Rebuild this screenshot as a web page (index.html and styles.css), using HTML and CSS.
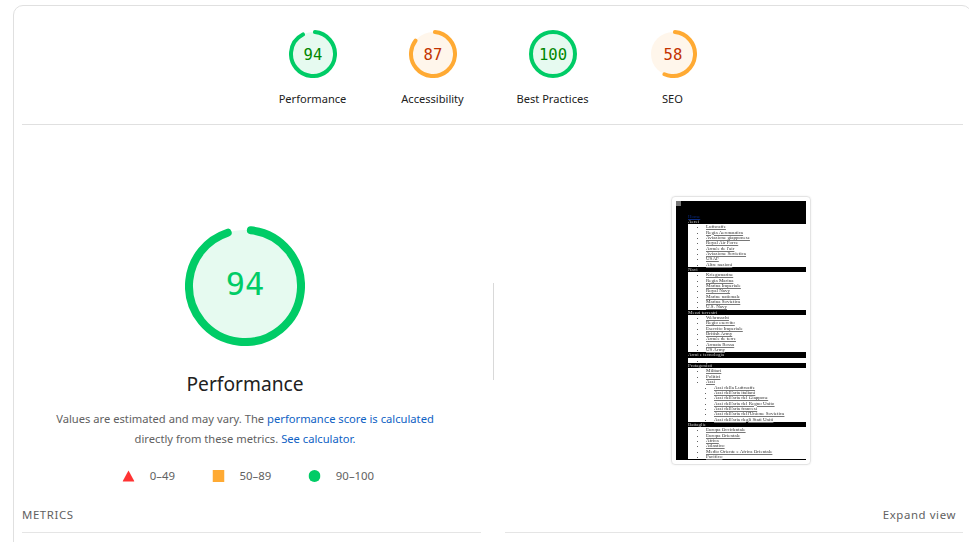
FILE: index.html
```html
<!DOCTYPE html>
<html lang="en">
<head>
<meta charset="utf-8">
<title>Lighthouse report</title>
<link rel="stylesheet" href="styles.css">
</head>
<body>
<div class="card">
  <div class="scores">
    <div class="score">
      <svg class="gauge pass" viewBox="0 0 48 48"><circle class="disc" cx="24" cy="24" r="22"/><circle class="arc" cx="24" cy="24" r="22" pathLength="100" stroke-dasharray="91 100" transform="rotate(-85 24 24)"/><text class="num" x="24" y="29.5">94</text></svg>
      <div class="label">Performance</div>
    </div>
    <div class="score">
      <svg class="gauge avg" viewBox="0 0 48 48"><circle class="disc" cx="24" cy="24" r="22"/><circle class="arc" cx="24" cy="24" r="22" pathLength="100" stroke-dasharray="84 100" transform="rotate(-85 24 24)"/><text class="num" x="24" y="29.5">87</text></svg>
      <div class="label">Accessibility</div>
    </div>
    <div class="score">
      <svg class="gauge pass" viewBox="0 0 48 48"><circle class="disc" cx="24" cy="24" r="22"/><circle class="arc" cx="24" cy="24" r="22"/><text class="num" x="24" y="29.5">100</text></svg>
      <div class="label">Best Practices</div>
    </div>
    <div class="score">
      <svg class="gauge avg" viewBox="0 0 48 48"><circle class="disc" cx="24" cy="24" r="22"/><circle class="arc" cx="24" cy="24" r="22" pathLength="100" stroke-dasharray="55 100" transform="rotate(-85 24 24)"/><text class="num" x="24" y="29.5">58</text></svg>
      <div class="label">SEO</div>
    </div>
  </div>

  <div class="main">
    <section class="summary">
      <svg class="big-gauge" viewBox="0 0 120 120"><circle class="big-disc" cx="60" cy="60" r="56"/><circle class="big-arc" cx="60" cy="60" r="56" pathLength="360" stroke-dasharray="336 360" transform="rotate(-84 60 60)"/><text class="big-num" x="60" y="69">94</text></svg>
      <h1 class="title">Performance</h1>
      <p class="note">Values are estimated and may vary. The <a href="#">performance score is calculated</a><br>directly from these metrics. <a href="#">See calculator.</a></p>
      <div class="legend">
        <span class="key"><svg class="mark" viewBox="0 0 12 12"><path class="fail" d="M6 0.5 12 11.5H0Z"/></svg>0–49</span>
        <span class="key"><svg class="mark" viewBox="0 0 12 12"><rect class="mid" width="12" height="12"/></svg>50–89</span>
        <span class="key"><svg class="mark" viewBox="0 0 12 12"><circle class="good" cx="6" cy="6" r="6"/></svg>90–100</span>
      </div>
    </section>
    <div class="rule"></div>
    <div class="frame">
      <div class="shot">
        <div class="burger"></div>
        <div class="page">
          <a class="home" href="#">Home</a>
          <div class="bar">Aerei</div>
          <ul><li>Luftwaffe</li><li>Regia Aeronautica</li><li>Aviazione giapponese</li><li>Royal Air Force</li><li>Armée de l'air</li><li>Aviazione Sovietica</li><li>USAF</li><li>Altre nazioni</li></ul>
          <div class="bar">Navi</div>
          <ul><li>Kriegsmarine</li><li>Regia Marina</li><li>Marina Imperiale</li><li>Royal Navy</li><li>Marine nationale</li><li>Marina Sovietica</li><li>U.S. Navy</li></ul>
          <div class="bar">Mezzi terrestri</div>
          <ul><li>Wehrmacht</li><li>Regio esercito</li><li>Esercito Imperiale</li><li>British Army</li><li>Armée de terre</li><li>Armata Rossa</li><li>US Army</li></ul>
          <div class="bar">Armi e tecnologia</div>
          <ul><li>&nbsp;</li></ul>
          <div class="bar">Protagonisti</div>
          <ul><li>Militari</li><li>Politici</li><li>Assi
            <ul><li>Assi della Luftwaffe</li><li>Assi dell'aria italiani</li><li>Assi dell'aria del Giappone</li><li>Assi dell'aria del Regno Unito</li><li>Assi dell'aria francesi</li><li>Assi dell'aria dell'Unione Sovietica</li><li>Assi dell'aria degli Stati Uniti</li></ul>
          </li></ul>
          <div class="bar">Battaglie</div>
          <ul><li>Europa Occidentale</li><li>Europa Orientale</li><li>Africa</li><li>Atlantico</li><li>Medio Oriente e Africa Orientale</li><li>Pacifico</li></ul>
        </div>
      </div>
    </div>
  </div>

  <div class="metrics">
    <div class="metrics-cell">METRICS</div>
    <div class="metrics-cell expand">Expand view</div>
  </div>
</div>
</body>
</html>
```
FILE: styles.css
```css
html, body {
  margin: 0;
  height: 542px;
  overflow: hidden;
  background: #fff;
}
body {
  font-family: "Noto Sans", "Open Sans", sans-serif;
  color: #212121;
}
.card {
  box-sizing: border-box;
  width: 959px;
  height: 560px;
  margin: 5px 0 0 13px;
  padding: 0 8px;
  border: 1px solid #e0e0e0;
  border-radius: 10px;
}
.scores {
  display: flex;
  justify-content: center;
  height: 119px;
  box-sizing: border-box;
  padding: 24px 0 0 0;
  border-bottom: 1px solid #e0e0e0;
}
.score {
  width: 120px;
  display: flex;
  flex-direction: column;
  align-items: center;
}
.gauge {
  width: 48px;
  height: 48px;
}
.disc {
  stroke: none;
}
.arc {
  fill: none;
  stroke-width: 4;
  stroke-linecap: round;
}
.pass .disc { fill: #e6faf0; }
.pass .arc { stroke: #0c6; }
.pass .num { fill: #080; }
.avg .disc { fill: #fff6eb; }
.avg .arc { stroke: #fa3; }
.avg .num { fill: #c33300; }
.num {
  font-family: "DejaVu Sans Mono", monospace;
  font-size: 15.6px;
  text-anchor: middle;
}
.label {
  margin-top: 12px;
  font-size: 11.1px;
  line-height: 17px;
  white-space: nowrap;
}
.main {
  display: flex;
  height: 372px;
}
.summary {
  width: 446px;
  padding-top: 101px;
  display: flex;
  flex-direction: column;
  align-items: center;
}
.big-gauge {
  width: 120px;
  height: 120px;
}
.big-disc {
  fill: #e6faf0;
}
.big-arc {
  fill: none;
  stroke: #0c6;
  stroke-width: 8;
  stroke-linecap: round;
}
.big-num {
  font-family: "DejaVu Sans Mono", monospace;
  font-size: 32px;
  fill: #0c6;
  text-anchor: middle;
}
.title {
  margin: 24px 0 0;
  font-size: 19.2px;
  font-weight: 400;
  line-height: 28px;
}
.note {
  margin: 11px 0 0;
  font-size: 11.2px;
  line-height: 20px;
  color: #616161;
  text-align: center;
  white-space: nowrap;
}
.note a {
  color: #0f62c4;
  text-decoration: none;
}
.legend {
  display: flex;
  gap: 37.5px;
  margin-top: 19px;
  font-size: 11.4px;
  line-height: 16px;
  color: #616161;
  transform: translateX(3.5px);
}
.key {
  display: flex;
  align-items: center;
  gap: 15px;
}
.mark {
  width: 12px;
  height: 12px;
}
.fail { fill: #f33; }
.mid { fill: #fa3; }
.good { fill: #0c6; }
.rule {
  align-self: flex-start;
  width: 1px;
  height: 97px;
  margin: 158px 0 0 25px;
  background: #d9d9d9;
}
.frame {
  align-self: flex-start;
  box-sizing: border-box;
  width: 140px;
  height: 269px;
  margin: 71px 0 0 177px;
  padding: 4px;
  border: 1px solid #e4e4e4;
  border-radius: 4px;
  box-shadow: 0 0 2px rgba(0, 0, 0, .08);
}
.shot {
  position: relative;
  box-sizing: border-box;
  width: 130px;
  height: 259px;
  padding: 12.5px 0 0 12px;
  background: #000;
  font-family: "Liberation Serif", serif;
  font-size: 5px;
  line-height: 5.34px;
  filter: blur(.45px);
}
.burger {
  position: absolute;
  left: 0;
  top: 0;
  width: 5px;
  height: 5px;
  background: #777;
}
.home {
  display: block;
  color: #0a2a80;
  text-decoration: underline;
}
.bar {
  color: #ccc;
  background: #000;
}
.page ul {
  margin: 0;
  padding: 0 0 0 18px;
  background: #fff;
  color: #333;
  list-style: disc;
}
.page li {
  text-decoration: underline;
  text-decoration-color: #777;
  white-space: nowrap;
}
.page ul ul {
  padding-left: 8px;
}
.metrics {
  display: flex;
  gap: 24px;
  position: relative;
  top: -2px;
}
.metrics-cell {
  box-sizing: border-box;
  width: 459px;
  height: 38px;
  padding-top: 12px;
  border-bottom: 1px solid #e5e5e5;
  font-size: 11.4px;
  line-height: 16px;
  letter-spacing: .6px;
  color: #616161;
}
.expand {
  padding-right: 7px;
  text-align: right;
}
```
